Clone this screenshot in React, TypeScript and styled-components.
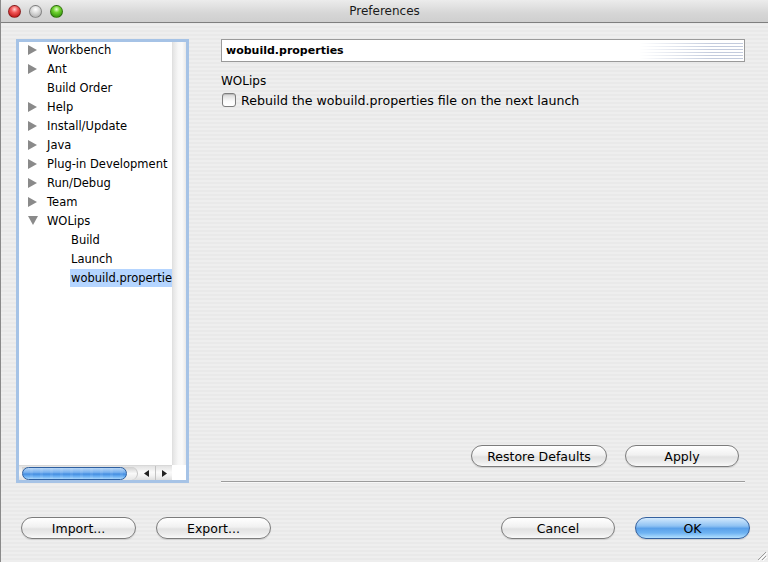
import React from "react";
import styled, { createGlobalStyle, css } from "styled-components";

const Global = createGlobalStyle`
  html, body { margin: 0; padding: 0; }
  body { font-family: "DejaVu Sans", "Liberation Sans", sans-serif; color: #000; }
  * { box-sizing: border-box; }
`;

const Window = styled.div`
  position: relative;
  width: 768px;
  height: 562px;
  display: flex;
  flex-direction: column;
  border-left: 1px solid #8a8a8a;
  background: repeating-linear-gradient(to bottom, #eeeeee 0 2px, #e9e9e9 2px 4px);
  overflow: hidden;
`;

const TitleBar = styled.div`
  height: 23px;
  flex: none;
  display: flex;
  align-items: center;
  position: relative;
  background: linear-gradient(to bottom, #ececec, #d6d6d6 60%, #cfcfcf);
  border-bottom: 1px solid #7f7f7f;
`;

const Lights = styled.div`
  display: flex;
  gap: 8px;
  padding-left: 7px;
  padding-top: 1px;
`;

const Light = styled.span<{ $c: "red" | "gray" | "green" }>`
  width: 13px;
  height: 13px;
  border-radius: 50%;
  border: 1px solid rgba(0, 0, 0, 0.35);
  ${(p) =>
    p.$c === "red"
      ? css`background: radial-gradient(circle at 50% 30%, #ffd0d0 0, #f25a5a 35%, #b80c0c 90%);`
      : p.$c === "green"
      ? css`background: radial-gradient(circle at 50% 30%, #e6ffd0 0, #6fd22f 35%, #2c8a06 90%);`
      : css`background: radial-gradient(circle at 50% 30%, #ffffff 0, #dcdcdc 40%, #a9a9a9 95%);`}
`;

const Title = styled.div`
  position: absolute;
  left: 0;
  right: 0;
  top: 0;
  height: 23px;
  line-height: 23px;
  text-align: center;
  font-size: 12px;
  color: #1a1a1a;
  pointer-events: none;
`;

const Main = styled.div`
  height: 460px;
  flex: none;
  display: flex;
  padding: 16px 23px 0 15px;
`;

const TreeFrame = styled.div`
  width: 173px;
  height: 444px;
  flex: none;
  border: 3px solid #a6c3e6;
  display: grid;
  grid-template-columns: 153px 14px;
  grid-template-rows: 1fr 15px;
  background: #fff;
`;

const Viewport = styled.div`
  overflow: hidden;
  background: #fff;
  font-size: 11.5px;
`;

const RowList = styled.div`
  margin-top: -2px;
`;

const Row = styled.div<{ $depth: number }>`
  height: 19px;
  display: flex;
  align-items: center;
  white-space: nowrap;
  padding-left: ${(p) => (p.$depth === 0 ? 9 : 51)}px;
`;

const Twisty = styled.span`
  width: 18px;
  flex: none;
  display: flex;
  align-items: center;
`;

const Label = styled.span<{ $selected?: boolean }>`
  padding: 2px 1px;
  line-height: 14px;
  background: ${(p) => (p.$selected ? "#b5d5ff" : "transparent")};
  ${(p) => p.$selected && css`flex: 1;`}
`;

const VScroll = styled.div`
  background: linear-gradient(to right, #e4e4e4, #f7f7f7 40%, #fafafa 70%, #e9e9e9);
  border-left: 1px solid #e0e0e0;
`;

const HScroll = styled.div`
  display: flex;
  align-items: center;
  background: linear-gradient(to bottom, #e2e2e2, #fafafa 45%, #f2f2f2 70%, #dedede);
  border-top: 1px solid #d8d8d8;
  padding-left: 3px;
`;

const Track = styled.div`
  width: 116px;
  height: 13px;
  border-radius: 0 7px 7px 0;
  flex: none;
  display: flex;
  align-items: center;
  background: linear-gradient(to bottom, #cfcfcf, #f9f9f9 50%, #e6e6e6);
  border-right: 1px solid #c4c4c4;
`;

const Thumb = styled.div`
  width: 105px;
  height: 13px;
  border-radius: 7px;
  border: 1px solid #2e5f9f;
  background:
    repeating-linear-gradient(to right, rgba(255,255,255,0) 0 7px, rgba(255,255,255,0.08) 7px 10px),
    linear-gradient(to bottom, #b8d6f6 0%, #78b0ee 40%, #448ee2 55%, #72b5f5 80%, #a8d5fb 100%);
`;

const Arrows = styled.div`
  display: flex;
  height: 100%;
`;

const ArrowBtn = styled.span<{ $first?: boolean }>`
  width: 17px;
  display: flex;
  align-items: center;
  justify-content: center;
  border-left: ${(p) => (p.$first ? "none" : "1px solid #c2c2c2")};
`;

const Corner = styled.div`
  background: #fff;
`;

const RightCol = styled.div`
  flex: 1;
  margin-left: 32px;
  display: flex;
  flex-direction: column;
`;

const HeaderField = styled.div`
  height: 23px;
  display: flex;
  align-items: center;
  background: #fff;
  border: 1px solid #9a9a9a;
  padding-left: 4px;
`;

const HeaderText = styled.span`
  font-weight: bold;
  font-size: 11px;
  flex: 1;
`;

const HeaderDeco = styled.span`
  width: 104px;
  height: 17px;
  margin-right: 1px;
  background: repeating-linear-gradient(to bottom, #fff 0 1px, #c3cbdd 1px 2px, #fff 2px 3px);
  -webkit-mask-image: linear-gradient(to right, transparent 0%, rgba(0,0,0,0.5) 35%, #000 70%);
  mask-image: linear-gradient(to right, transparent 0%, rgba(0,0,0,0.5) 35%, #000 70%);
`;

const SectionLabel = styled.div`
  margin-top: 11px;
  height: 16px;
  line-height: 16px;
  font-size: 12px;
`;

const CheckRow = styled.label`
  margin-top: 2px;
  height: 18px;
  display: flex;
  align-items: center;
  gap: 5px;
  font-size: 12.6px;
  padding-left: 1px;
`;

const CheckBox = styled.span`
  width: 14px;
  height: 14px;
  flex: none;
  border-radius: 3px;
  border: 1px solid #7d7d7d;
  background: linear-gradient(to bottom, #d6d6d6, #fbfbfb 60%, #ffffff);
  box-shadow: inset 0 1px 1px rgba(0,0,0,0.15);
`;

const Spacer = styled.div`
  flex: 1;
`;

const ButtonRow = styled.div<{ $gap: number }>`
  display: flex;
  gap: ${(p) => p.$gap}px;
`;

const RightButtons = styled(ButtonRow)`
  justify-content: flex-end;
  margin-right: 6px;
`;

const Separator = styled.div`
  margin-top: 14px;
  height: 2px;
  border-top: 1px solid #9c9c9c;
  border-bottom: 1px solid #f8f8f8;
`;

const Button = styled.button<{ $w: number; $default?: boolean }>`
  width: ${(p) => p.$w}px;
  height: 22px;
  padding: 0;
  font-family: "DejaVu Sans", "Liberation Sans", sans-serif;
  font-size: 12.5px;
  color: #000;
  border-radius: 11px;
  border: 1px solid #7c7c7c;
  background: linear-gradient(to bottom, #ffffff 0%, #f1f1f1 45%, #e2e2e2 55%, #ececec 80%, #fafafa 100%);
  box-shadow: 0 1px 1px rgba(0,0,0,0.12);
  ${(p) =>
    p.$default &&
    css`
      border-color: #35619e;
      background: linear-gradient(to bottom, #d3e9fd 0%, #8fc2f3 40%, #5aa0e9 52%, #6fb3f2 75%, #b3e0ff 100%);
    `}
`;

const Footer = styled.div`
  display: flex;
  padding: 34px 18px 0 20px;
`;

const FooterLeft = styled(ButtonRow)`
  flex: 1;
`;

const Grip = styled.svg`
  position: absolute;
  right: 1px;
  bottom: 1px;
`;

type Item = { label: string; kids?: boolean; open?: boolean; depth: number; selected?: boolean };

const items: Item[] = [
  { label: "Workbench", kids: true, depth: 0 },
  { label: "Ant", kids: true, depth: 0 },
  { label: "Build Order", depth: 0 },
  { label: "Help", kids: true, depth: 0 },
  { label: "Install/Update", kids: true, depth: 0 },
  { label: "Java", kids: true, depth: 0 },
  { label: "Plug-in Development", kids: true, depth: 0 },
  { label: "Run/Debug", kids: true, depth: 0 },
  { label: "Team", kids: true, depth: 0 },
  { label: "WOLips", kids: true, open: true, depth: 0 },
  { label: "Build", depth: 1 },
  { label: "Launch", depth: 1 },
  { label: "wobuild.properties", depth: 1, selected: true },
];

const TriRight = () => (
  <svg width="9" height="10" viewBox="0 0 9 10">
    <polygon points="0,0 9,5 0,10" fill="#8a8a8a" />
  </svg>
);
const TriDown = () => (
  <svg width="10" height="9" viewBox="0 0 10 9">
    <polygon points="0,0 10,0 5,9" fill="#8a8a8a" />
  </svg>
);

export default function App() {
  return (
    <>
      <Global />
      <Window>
        <TitleBar>
          <Lights>
            <Light $c="red" />
            <Light $c="gray" />
            <Light $c="green" />
          </Lights>
          <Title>Preferences</Title>
        </TitleBar>
        <Main>
          <TreeFrame>
            <Viewport>
              <RowList>
                {items.map((it) => (
                  <Row key={it.label} $depth={it.depth}>
                    {it.depth === 0 && <Twisty>{it.kids ? it.open ? <TriDown /> : <TriRight /> : null}</Twisty>}
                    <Label $selected={it.selected}>{it.label}</Label>
                  </Row>
                ))}
              </RowList>
            </Viewport>
            <VScroll />
            <HScroll>
              <Track>
                <Thumb />
              </Track>
              <Arrows>
                <ArrowBtn $first>
                  <svg width="5" height="7" viewBox="0 0 5 7"><polygon points="5,0 0,3.5 5,7" fill="#222" /></svg>
                </ArrowBtn>
                <ArrowBtn>
                  <svg width="5" height="7" viewBox="0 0 5 7"><polygon points="0,0 5,3.5 0,7" fill="#222" /></svg>
                </ArrowBtn>
              </Arrows>
            </HScroll>
            <Corner />
          </TreeFrame>
          <RightCol>
            <HeaderField>
              <HeaderText>wobuild.properties</HeaderText>
              <HeaderDeco />
            </HeaderField>
            <SectionLabel>WOLips</SectionLabel>
            <CheckRow>
              <CheckBox />
              Rebuild the wobuild.properties file on the next launch
            </CheckRow>
            <Spacer />
            <RightButtons $gap={18}>
              <Button $w={136}>Restore Defaults</Button>
              <Button $w={114}>Apply</Button>
            </RightButtons>
            <Separator />
          </RightCol>
        </Main>
        <Footer>
          <FooterLeft $gap={20}>
            <Button $w={115}>Import...</Button>
            <Button $w={115}>Export...</Button>
          </FooterLeft>
          <ButtonRow $gap={20}>
            <Button $w={114}>Cancel</Button>
            <Button $w={115} $default>OK</Button>
          </ButtonRow>
        </Footer>
        <Grip width="12" height="12" viewBox="0 0 12 12">
          <line x1="11" y1="3" x2="3" y2="11" stroke="#9a9a9a" />
          <line x1="11" y1="7" x2="7" y2="11" stroke="#9a9a9a" />
          <line x1="12" y1="4" x2="4" y2="12" stroke="#fff" />
          <line x1="12" y1="8" x2="8" y2="12" stroke="#fff" />
        </Grip>
      </Window>
    </>
  );
}
